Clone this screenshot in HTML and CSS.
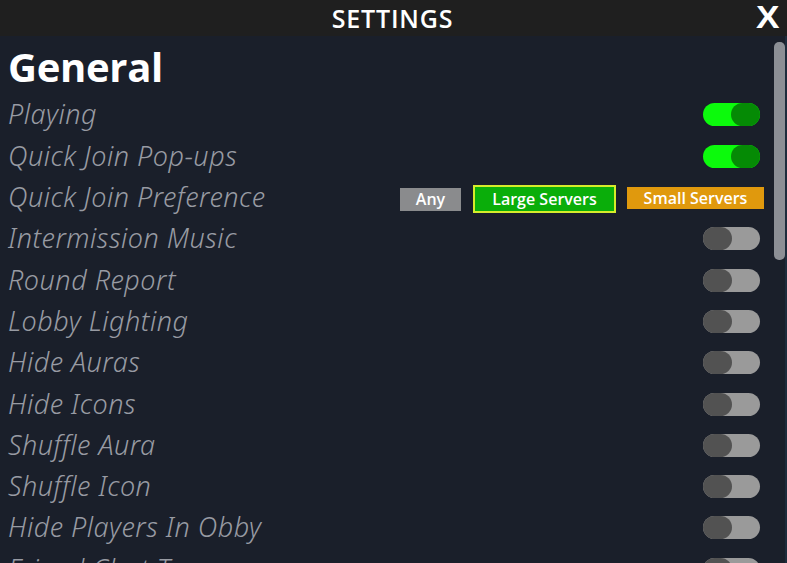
FILE: index.html
```html
<!DOCTYPE html>
<html>
<head>
<meta charset="utf-8">
<link rel="stylesheet" href="styles.css">
</head>
<body>
<div class="window">
  <header class="topbar">
    <span class="title">SETTINGS</span>
    <span class="close">X</span>
  </header>
  <div class="content">
    <div class="list">
      <h1 class="section">General</h1>
      <div class="row"><span class="label">Playing</span><span class="toggle on"><span class="knob"></span></span></div>
      <div class="row"><span class="label">Quick Join Pop-ups</span><span class="toggle on"><span class="knob"></span></span></div>
      <div class="row"><span class="label">Quick Join Preference</span>
        <div class="choices">
          <span class="choice any">Any</span>
          <span class="choice large">Large Servers</span>
          <span class="choice small">Small Servers</span>
        </div>
      </div>
      <div class="row"><span class="label">Intermission Music</span><span class="toggle"><span class="knob"></span></span></div>
      <div class="row"><span class="label">Round Report</span><span class="toggle"><span class="knob"></span></span></div>
      <div class="row"><span class="label">Lobby Lighting</span><span class="toggle"><span class="knob"></span></span></div>
      <div class="row"><span class="label">Hide Auras</span><span class="toggle"><span class="knob"></span></span></div>
      <div class="row"><span class="label">Hide Icons</span><span class="toggle"><span class="knob"></span></span></div>
      <div class="row"><span class="label">Shuffle Aura</span><span class="toggle"><span class="knob"></span></span></div>
      <div class="row"><span class="label">Shuffle Icon</span><span class="toggle"><span class="knob"></span></span></div>
      <div class="row"><span class="label">Hide Players In Obby</span><span class="toggle"><span class="knob"></span></span></div>
      <div class="row"><span class="label">Friend Chat Tags</span><span class="toggle"><span class="knob"></span></span></div>
    </div>
    <div class="scrollbar"><div class="thumb"></div></div>
  </div>
</div>
</body>
</html>
```

FILE: styles.css
```css
html, body {
  margin: 0;
  padding: 0;
  width: 787px;
  height: 563px;
  overflow: hidden;
  background: #1a1f2a;
  font-family: "Open Sans", "Noto Sans", sans-serif;
}
.window {
  display: flex;
  flex-direction: column;
  height: 563px;
}
.topbar {
  height: 36px;
  flex: none;
  background: #1f1f1f;
  display: flex;
  align-items: center;
  justify-content: center;
  position: relative;
}
.title {
  color: #ffffff;
  font-size: 25px;
  font-weight: 600;
  letter-spacing: 0.8px;
  margin-left: -2px;
}
.close {
  position: absolute;
  right: 9px;
  top: 0;
  line-height: 34px;
  color: #ffffff;
  font-family: "Liberation Sans", sans-serif;
  font-size: 32px;
  font-weight: 700;
  transform: scaleX(1.1);
}
.content {
  flex: 1;
  display: flex;
  min-height: 0;
}
.list {
  flex: 1;
  padding: 0 14px 0 8px;
  overflow: hidden;
}
.section {
  margin: 0;
  height: 58.3px;
  box-sizing: border-box;
  padding-top: 3px;
  color: #ffffff;
  font-size: 40px;
  font-weight: 700;
  line-height: 55px;
  letter-spacing: -0.3px;
}
.row {
  height: 41.3px;
  display: flex;
  align-items: center;
  justify-content: space-between;
}
.label {
  color: #989ba3;
  font-family: "Noto Sans", sans-serif;
  font-style: italic;
  font-weight: 350;
  font-size: 27px;
  letter-spacing: 0.5px;
  margin-top: -2px;
}
.toggle {
  width: 57px;
  height: 23px;
  border-radius: 12px;
  background: #9a9a9a;
  display: flex;
  justify-content: flex-start;
}
.toggle .knob {
  width: 29px;
  height: 23px;
  border-radius: 12px;
  background: #525252;
}
.toggle.on {
  background: #0cfa0c;
  justify-content: flex-end;
}
.toggle.on .knob {
  background: #058a05;
}
.choices {
  display: flex;
  align-items: center;
  gap: 12px;
  margin-right: -4px;
}
.choice {
  color: #ffffff;
  font-size: 16px;
  font-weight: 600;
  display: flex;
  align-items: center;
  justify-content: center;
  box-sizing: border-box;
}
.choice.any {
  width: 61px;
  height: 23px;
  background: #8a8b8d;
  margin-top: 3px;
}
.choice.large {
  width: 143px;
  height: 28px;
  background: #0aae0a;
  border: 2px solid #d6ec2a;
  margin-top: 3px;
}
.choice.small {
  width: 137px;
  height: 22px;
  background: #e0990d;
  margin-left: -1px;
}
.scrollbar {
  width: 13px;
  flex: none;
  padding-top: 6px;
  box-sizing: border-box;
  border-right: 2px solid #1d2c3c;
}
.thumb {
  width: 11px;
  height: 218px;
  border-radius: 5px;
  background: #8c8f95;
}
```
